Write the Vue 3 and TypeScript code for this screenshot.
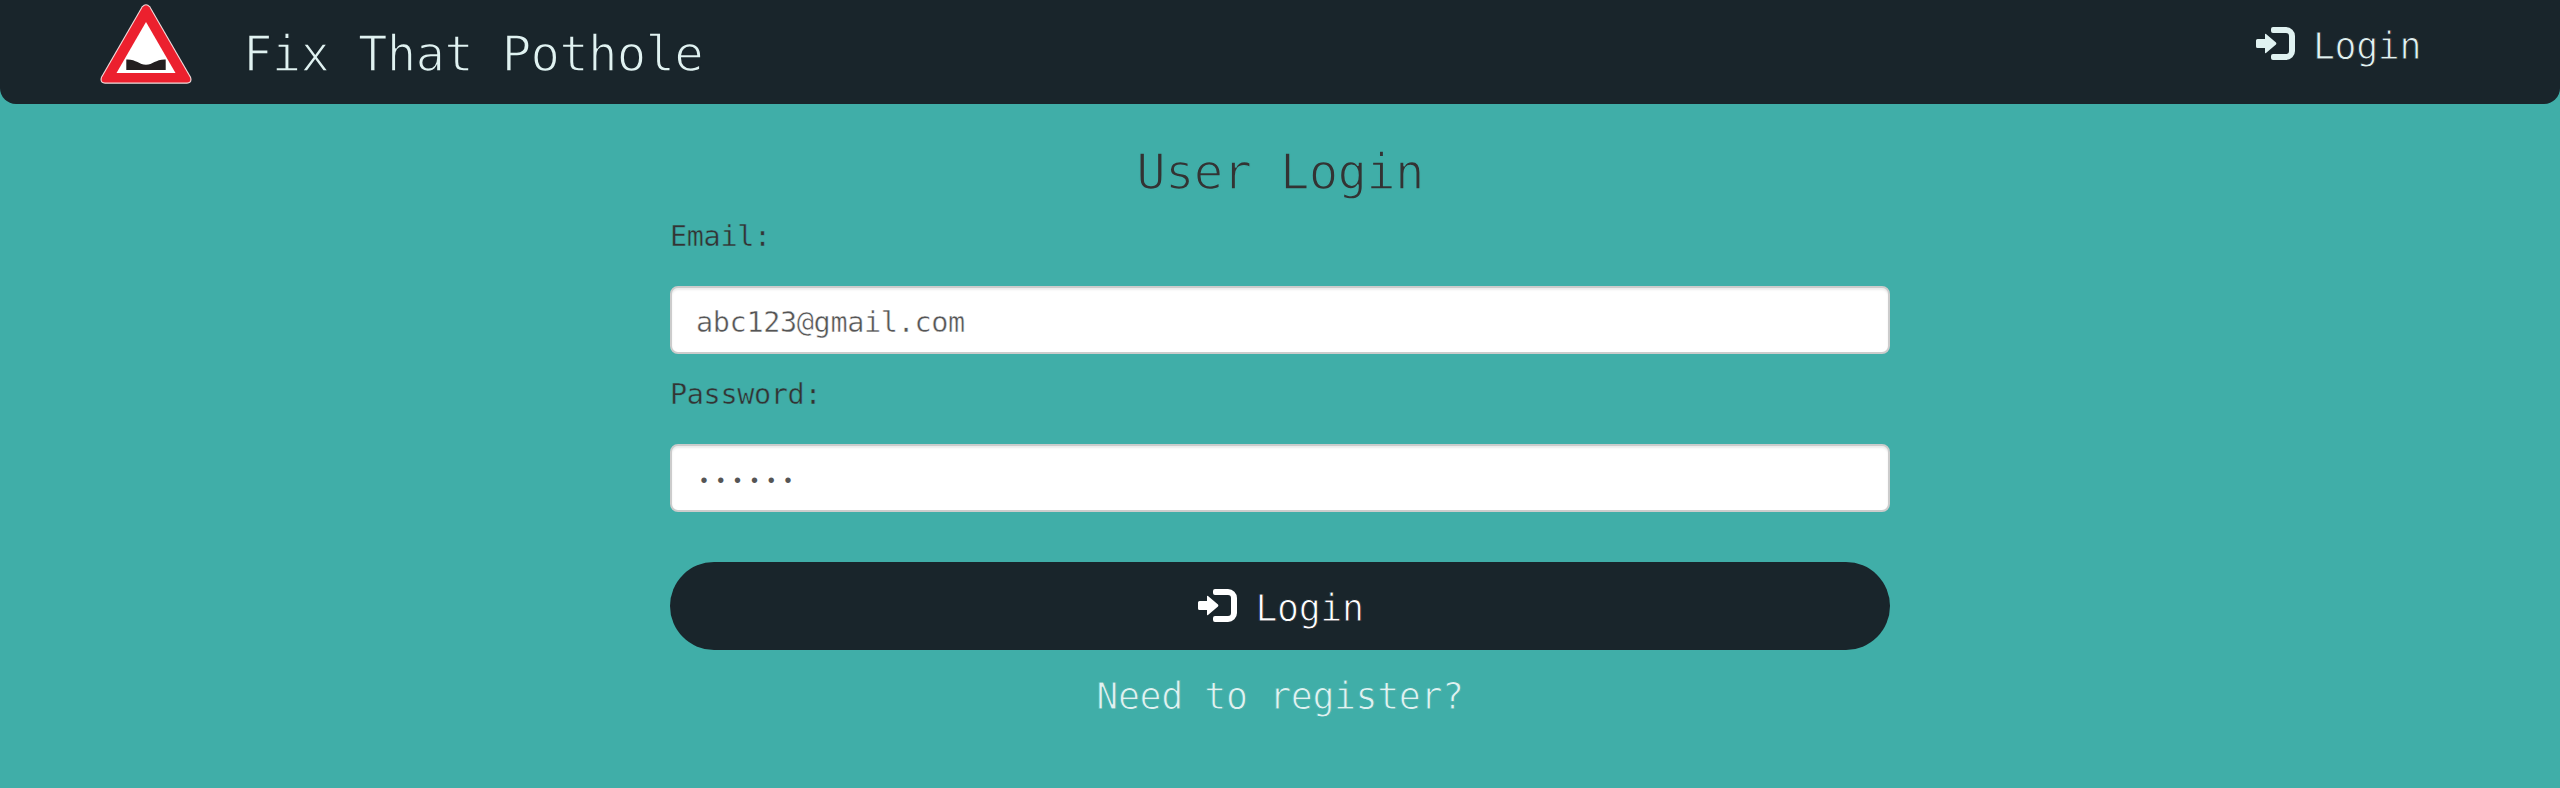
<script setup lang="ts">
import { ref } from 'vue'

const email = ref('abc123@gmail.com')
const password = ref('abc123')
</script>

<template>
  <div class="page">
    <header class="navbar">
      <a class="brand">
        <svg class="sign" viewBox="0 0 92 80" width="92" height="80">
          <path d="M41.800 2.600 Q46 -2.200 50.200 2.600 L91 73 Q93 79.500 87 79.700 H5 Q-1 79.500 1 73 Z" fill="#f3dddd" />
          <path d="M42.600 3.200 Q46 -.8 49.400 3.200 L90 73.600 Q91.500 78.300 87 78.500 H5 Q.5 78.300 2 73.600 Z" fill="#ec202e" />
          <path d="M46 18 L75.500 69 H16.500 Z" fill="#fff" />
          <path d="M26.300 55.500 C36 55 39 60.700 46 60.700 S56 55 65.700 55.500 V66 H26.300 Z" fill="#231f20" />
        </svg>
        <span class="type title light">Fix That Pothole</span>
      </a>
      <a class="action light nav-login">
        <svg class="icon" viewBox="0 0 39 33" width="39" height="33">
          <path d="M17 0H30a9 9 0 0 1 9 9V24a9 9 0 0 1-9 9H17q-2 0-2-2V29q0-2 2-2H30q3 0 3-3V9q0-3-3-3H17q-2 0-2-2V2q0-2 2-2Z" />
          <path d="M1.500 12H9V7.500q0-1.300 1-.5L20 15.600q.8.900 0 1.800L10 26q-1 .8-1-.5V21H1.500Q0 21 0 19.500V13.500Q0 12 1.500 12Z" />
        </svg>
        <span class="type medium">Login</span>
      </a>
    </header>

    <main class="panel">
      <h1 class="type title heading">User Login</h1>
      <label class="type small label" for="email">Email:</label>
      <input id="email" v-model="email" class="type small field" type="email" />
      <label class="type small label second" for="password">Password:</label>
      <input id="password" v-model="password" class="type small field secret" type="password" />
      <button class="action submit" type="button">
        <svg class="icon" viewBox="0 0 39 33" width="39" height="33">
          <path d="M17 0H30a9 9 0 0 1 9 9V24a9 9 0 0 1-9 9H17q-2 0-2-2V29q0-2 2-2H30q3 0 3-3V9q0-3-3-3H17q-2 0-2-2V2q0-2 2-2Z" />
          <path d="M1.500 12H9V7.500q0-1.300 1-.5L20 15.600q.8.900 0 1.800L10 26q-1 .8-1-.5V21H1.500Q0 21 0 19.500V13.500Q0 12 1.500 12Z" />
        </svg>
        <span class="type medium">Login</span>
      </button>
      <a class="type medium register light">Need to register?</a>
    </main>
  </div>
</template>

<style>
html,
body {
  margin: 0;
  background: #40aea8;
}
</style>

<style scoped>
* {
  box-sizing: border-box;
}
.page {
  --dark: #19252b;
  --teal: #40aea8;
  --surface: var(--teal);
  min-height: 788px;
  background: var(--teal);
  color: #333;
}
.type {
  font-family: "DejaVu Sans Mono", monospace;
  font-weight: 400;
  white-space: pre;
}
.title {
  font-size: 49px;
  line-height: 60px;
  letter-spacing: -0.75px;
  -webkit-text-stroke: 1.5px var(--surface);
}
.medium {
  font-size: 36.5px;
  line-height: 48px;
  letter-spacing: -0.37px;
  -webkit-text-stroke: 0.9px var(--surface);
}
.small {
  font-size: 28.5px;
  line-height: 40px;
  letter-spacing: -0.36px;
  -webkit-text-stroke: 0.45px var(--surface);
}
.light {
  color: #e0f2f1;
}
.navbar {
  --surface: var(--dark);
  display: flex;
  justify-content: space-between;
  align-items: flex-start;
  height: 104px;
  padding: 4px 139px 0 100px;
  border-radius: 0 0 16px 16px;
  background: var(--dark);
}
.brand {
  display: flex;
  align-items: flex-start;
  gap: 51px;
}
.brand .title {
  margin-top: 21px;
}
.sign {
  display: block;
}
.action {
  display: flex;
  align-items: flex-start;
  gap: 18px;
}
.icon {
  flex: none;
  fill: currentColor;
}
.nav-login {
  margin-top: 23px;
}
.action .type {
  margin-top: -4px;
}
.panel {
  display: flex;
  flex-direction: column;
  width: 1220px;
  margin: 0 auto;
  padding-top: 39px;
}
.heading {
  margin: 0;
  text-align: center;
}
.label {
  margin: 14px 0 29px;
}
.label.second {
  margin: 21px 0 29px;
}
.field {
  --surface: #fff;
  width: 100%;
  height: 68px;
  padding: 4px 24px 0;
  border: 2px solid #ccc;
  border-radius: 8px;
  outline: none;
  background: #fff;
  box-shadow: inset 0 2px 2px rgba(0, 0, 0, 0.075);
  color: #555;
}
.secret {
  padding: 6px 26px 0;
  font-family: "Liberation Mono", monospace;
  font-size: 20px;
  letter-spacing: 4.8px;
  -webkit-text-stroke: 0;
}
.submit {
  --surface: var(--dark);
  justify-content: center;
  height: 88px;
  margin: 50px 0 0;
  padding: 27px 0 0 2px;
  border: 0;
  border-radius: 44px;
  background: var(--dark);
  color: #fff;
}
.register {
  margin-top: 23px;
  text-align: center;
}
</style>
